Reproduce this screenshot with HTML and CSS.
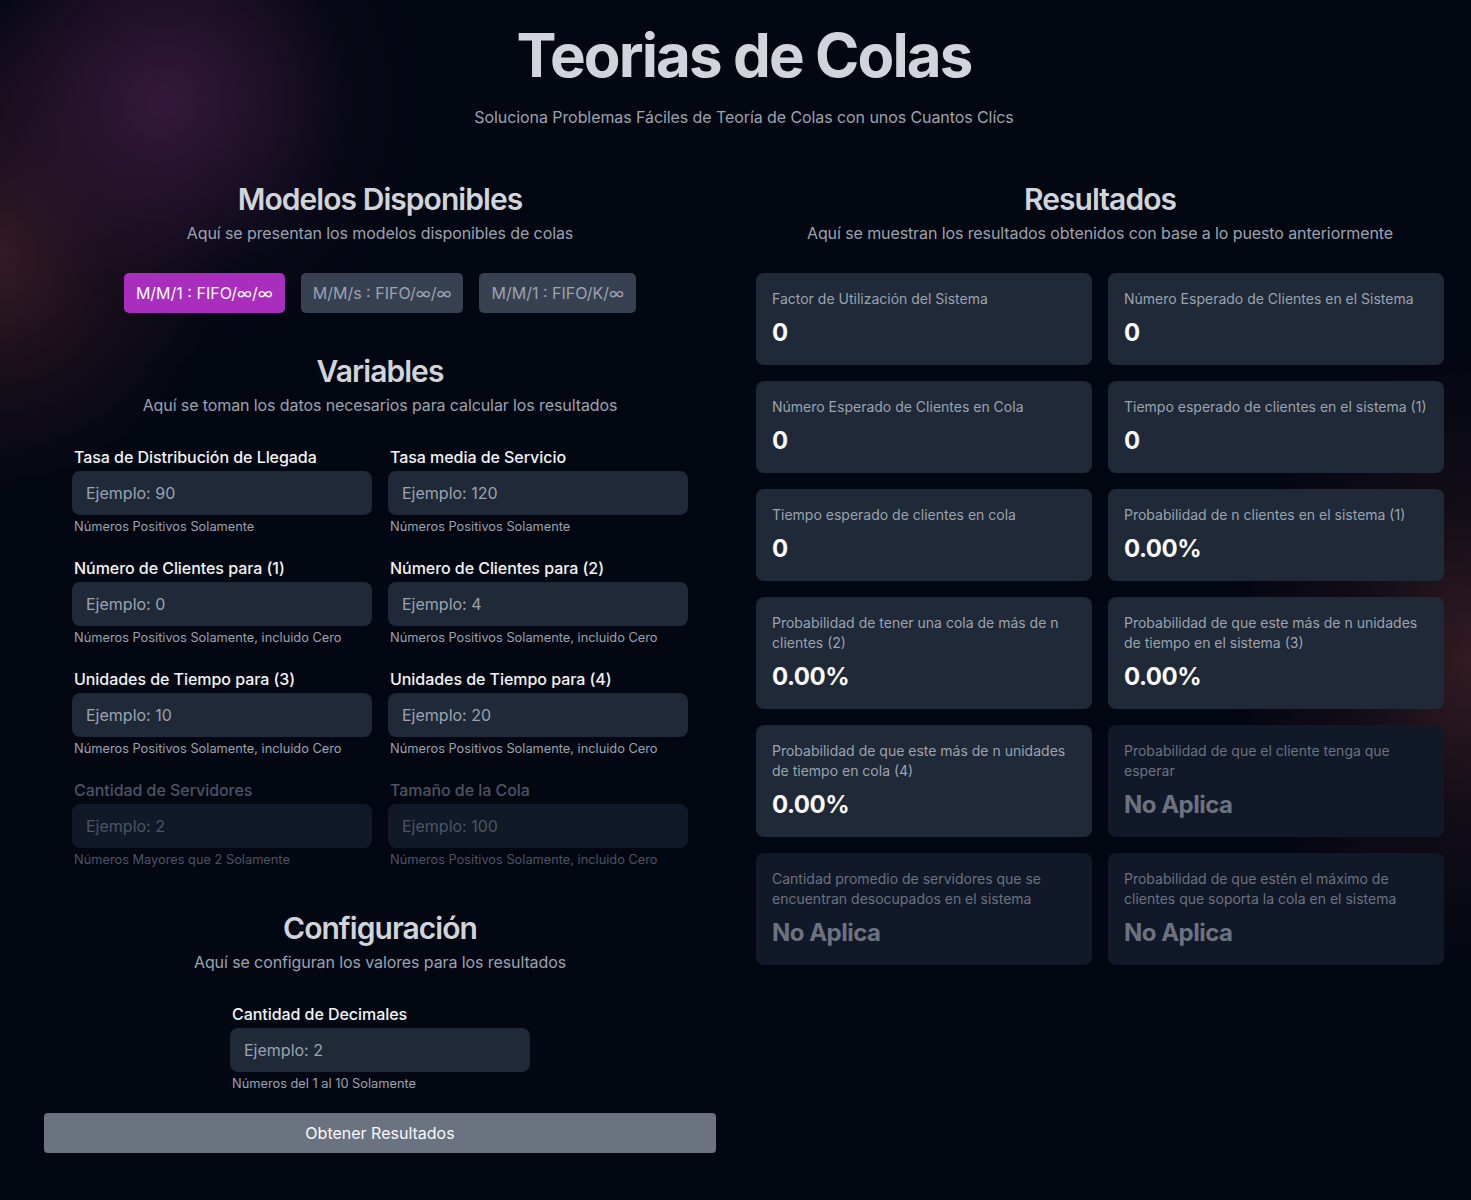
FILE: index.html
```html
<!DOCTYPE html>
<html lang="es">
<head>
<meta charset="utf-8">
<title>Teorias de Colas</title>
<link rel="stylesheet" href="styles.css">
</head>
<body>
<div class="glow"></div>
<main class="page">
  <header class="hero">
    <h1>Teorias de Colas</h1>
    <p>Soluciona Problemas Fáciles de Teoría de Colas con unos Cuantos Clícs</p>
  </header>
  <div class="columns">
    <section class="left">
      <h2>Modelos Disponibles</h2>
      <p class="sub">Aquí se presentan los modelos disponibles de colas</p>
      <div class="models">
        <button class="model active">M/M/1 : FIFO/∞/∞</button>
        <button class="model">M/M/s : FIFO/∞/∞</button>
        <button class="model">M/M/1 : FIFO/K/∞</button>
      </div>

      <h2 class="mt40">Variables</h2>
      <p class="sub">Aquí se toman los datos necesarios para calcular los resultados</p>
      <div class="fields">
        <div class="field">
          <label>Tasa de Distribución de Llegada</label>
          <input type="text" placeholder="Ejemplo: 90">
          <span class="hint">Números Positivos Solamente</span>
        </div>
        <div class="field">
          <label>Tasa media de Servicio</label>
          <input type="text" placeholder="Ejemplo: 120">
          <span class="hint">Números Positivos Solamente</span>
        </div>
        <div class="field">
          <label>Número de Clientes para (1)</label>
          <input type="text" placeholder="Ejemplo: 0">
          <span class="hint">Números Positivos Solamente, incluido Cero</span>
        </div>
        <div class="field">
          <label>Número de Clientes para (2)</label>
          <input type="text" placeholder="Ejemplo: 4">
          <span class="hint">Números Positivos Solamente, incluido Cero</span>
        </div>
        <div class="field">
          <label>Unidades de Tiempo para (3)</label>
          <input type="text" placeholder="Ejemplo: 10">
          <span class="hint">Números Positivos Solamente, incluido Cero</span>
        </div>
        <div class="field">
          <label>Unidades de Tiempo para (4)</label>
          <input type="text" placeholder="Ejemplo: 20">
          <span class="hint">Números Positivos Solamente, incluido Cero</span>
        </div>
        <div class="field disabled">
          <label>Cantidad de Servidores</label>
          <input type="text" placeholder="Ejemplo: 2" disabled>
          <span class="hint">Números Mayores que 2 Solamente</span>
        </div>
        <div class="field disabled">
          <label>Tamaño de la Cola</label>
          <input type="text" placeholder="Ejemplo: 100" disabled>
          <span class="hint">Números Positivos Solamente, incluido Cero</span>
        </div>
      </div>

      <h2 class="mt42">Configuración</h2>
      <p class="sub">Aquí se configuran los valores para los resultados</p>
      <div class="config">
        <div class="field">
          <label>Cantidad de Decimales</label>
          <input type="text" placeholder="Ejemplo: 2">
          <span class="hint">Números del 1 al 10 Solamente</span>
        </div>
      </div>
      <button class="submit">Obtener Resultados</button>
    </section>

    <section class="right">
      <h2>Resultados</h2>
      <p class="sub">Aquí se muestran los resultados obtenidos con base a lo puesto anteriormente</p>
      <div class="cards">
        <div class="card"><div class="card-title">Factor de Utilización del Sistema</div><div class="card-value">0</div></div>
        <div class="card"><div class="card-title">Número Esperado de Clientes en el Sistema</div><div class="card-value">0</div></div>
        <div class="card"><div class="card-title">Número Esperado de Clientes en Cola</div><div class="card-value">0</div></div>
        <div class="card"><div class="card-title">Tiempo esperado de clientes en el sistema (1)</div><div class="card-value">0</div></div>
        <div class="card"><div class="card-title">Tiempo esperado de clientes en cola</div><div class="card-value">0</div></div>
        <div class="card"><div class="card-title">Probabilidad de n clientes en el sistema (1)</div><div class="card-value">0.00%</div></div>
        <div class="card"><div class="card-title">Probabilidad de tener una cola de más de n clientes (2)</div><div class="card-value">0.00%</div></div>
        <div class="card"><div class="card-title">Probabilidad de que este más de n unidades de tiempo en el sistema (3)</div><div class="card-value">0.00%</div></div>
        <div class="card"><div class="card-title">Probabilidad de que este más de n unidades de tiempo en cola (4)</div><div class="card-value">0.00%</div></div>
        <div class="card off"><div class="card-title">Probabilidad de que el cliente tenga que esperar</div><div class="card-value">No Aplica</div></div>
        <div class="card off"><div class="card-title">Cantidad promedio de servidores que se encuentran desocupados en el sistema</div><div class="card-value">No Aplica</div></div>
        <div class="card off"><div class="card-title">Probabilidad de que estén el máximo de clientes que soporta la cola en el sistema</div><div class="card-value">No Aplica</div></div>
      </div>
    </section>
  </div>
</main>
</body>
</html>
```

FILE: styles.css
```css
* { box-sizing: border-box; }

html, body {
  margin: 0;
  padding: 0;
}

body {
  min-height: 1200px;
  background-color: #030712;
  font-family: Inter, "Noto Sans", "Liberation Sans", sans-serif;
  color: #d1d5db;
  position: relative;
  overflow: hidden;
}

.glow {
  position: absolute;
  inset: 0;
  pointer-events: none;
  background:
    radial-gradient(circle at 165px 100px, rgba(58, 26, 64, 0.9) 0px, rgba(48, 22, 54, 0.6) 100px, rgba(25, 12, 32, 0.2) 190px, rgba(10, 8, 20, 0) 270px),
    radial-gradient(ellipse 210px 230px at 0px 250px, rgba(66, 32, 42, 0.85) 0px, rgba(48, 24, 34, 0.45) 110px, rgba(20, 10, 20, 0) 220px),
    radial-gradient(ellipse 200px 260px at 1471px 660px, rgba(68, 34, 40, 0.75) 0px, rgba(45, 24, 32, 0.35) 120px, rgba(20, 10, 20, 0) 240px);
}

.page {
  position: relative;
  width: 1400px;
  margin-left: 44px;
  padding-top: 25px;
}

.hero {
  text-align: center;
}

.hero h1 {
  margin: 0;
  font-size: 60px;
  line-height: 60px;
  font-weight: 700;
  color: #d1d5db;
  letter-spacing: -1.9px;
}

.hero p {
  margin: 20px 0 0;
  font-size: 16px;
  line-height: 24px;
  color: #9ca3af;
  letter-spacing: -0.08px;
}

.columns {
  display: grid;
  grid-template-columns: 672px 688px;
  column-gap: 40px;
  margin-top: 52px;
}

.left, .right {
  display: flex;
  flex-direction: column;
  align-items: center;
}

h2 {
  margin: 0;
  font-size: 30px;
  line-height: 36px;
  font-weight: 600;
  color: #d1d5db;
  letter-spacing: -0.95px;
}

.sub {
  margin: 4px 0 0;
  font-size: 16px;
  line-height: 24px;
  color: #9ca3af;
  letter-spacing: -0.1px;
}

.mt40 { margin-top: 40px; }
.mt42 { margin-top: 42px; }

.models {
  display: flex;
  gap: 16px;
  margin-top: 28px;
}

.model {
  height: 40px;
  padding: 0 12px;
  border: none;
  border-radius: 5px;
  background: #374151;
  color: #9ca3af;
  font-family: inherit;
  font-size: 16px;
}

.model.active {
  background: #a92ebd;
  color: #f9fafb;
}

.fields {
  display: grid;
  grid-template-columns: 300px 300px;
  column-gap: 16px;
  row-gap: 21px;
  margin-top: 28px;
}

.field {
  display: flex;
  flex-direction: column;
  width: 300px;
}

.field label {
  font-size: 16px;
  line-height: 24px;
  font-weight: 500;
  color: #f3f4f6;
  padding-left: 2px;
  letter-spacing: -0.05px;
}

.field input {
  margin-top: 2px;
  height: 44px;
  border: none;
  border-radius: 8px;
  background: #1f2937;
  padding: 0 14px;
  font-family: inherit;
  font-size: 16px;
  color: #e5e7eb;
  outline: none;
}

.field input::placeholder {
  color: #9ca3af;
}

.hint {
  margin-top: 4px;
  padding-left: 2px;
  font-size: 12.8px;
  line-height: 16px;
  color: #9ca3af;
}

.field.disabled label { color: #4b5563; }
.field.disabled input { background: #111827; }
.field.disabled input::placeholder { color: #4b5563; }
.field.disabled .hint { color: #4b5563; }

.config {
  margin-top: 28px;
}

.submit {
  margin-top: 21px;
  width: 672px;
  height: 40px;
  border: none;
  border-radius: 4px;
  background: #6b7280;
  color: #f9fafb;
  font-family: inherit;
  font-size: 16px;
}

.cards {
  display: grid;
  grid-template-columns: 336px 336px;
  gap: 16px;
  margin-top: 28px;
  width: 688px;
}

.card {
  background: #1f2937;
  border-radius: 8px;
  padding: 16px;
}

.card-title {
  font-size: 14px;
  line-height: 20px;
  color: #9ca3af;
}

.card-value {
  margin-top: 8px;
  font-size: 24px;
  line-height: 32px;
  font-weight: 700;
  color: #f9fafb;
  letter-spacing: -0.5px;
}

.card.off {
  background: #111827;
}

.card.off .card-title { color: #6b7280; }
.card.off .card-value { color: #6b7280; }
```
